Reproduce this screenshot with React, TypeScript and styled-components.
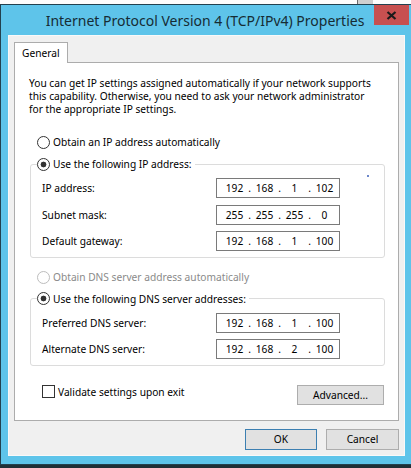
import React from 'react'
import styled, { createGlobalStyle } from 'styled-components'

const FONT = '"Noto Sans", "Open Sans", sans-serif'

const GlobalStyle = createGlobalStyle`
  html, body {
    margin: 0;
    padding: 0;
    background: #1f2f36;
  }
  body {
    font-family: ${FONT};
    -webkit-font-smoothing: antialiased;
  }
  * {
    box-sizing: border-box;
  }
`

const Screen = styled.div`
  width: 411px;
  height: 468px;
  overflow: hidden;
  display: flex;
  flex-direction: column;
  background: #1f2f36;
`
const Backdrop = styled.div`
  height: 4px;
  flex: none;
  display: flex;
  background: #fdfdfd;
`
const BackdropScroll = styled.div`
  margin-left: 357px;
  width: 16px;
  background: #cfcfcf;
  border-left: 1px solid #6a6a6a;
`
const Window = styled.div`
  flex: none;
  width: 411px;
  display: flex;
  flex-direction: column;
  background: #5ec4ea;
  border: 1px solid #22414f;
  border-right: none;
`
const TitleBar = styled.div`
  height: 30px;
  display: grid;
  grid-template-columns: 1fr auto 1fr;
  padding-right: 2px;
`
const Title = styled.div`
  grid-column: 2;
  align-self: center;
  font-size: 14px;
  line-height: 18px;
  color: #162c34;
  white-space: nowrap;
  padding-top: 1px;
`
const CloseButton = styled.div`
  grid-column: 3;
  justify-self: end;
  align-self: start;
  width: 35px;
  height: 20px;
  background: #c75050;
  display: flex;
  align-items: center;
  justify-content: center;
`
const Frame = styled.div`
  padding: 0 6px 8px 7px;
`
const Client = styled.div`
  background: #f0f0f0;
  padding: 7px 6px 6px 6px;
  box-shadow: inset 0 0 0 1px #f9f9f9;
  font-size: 10.2px;
  color: #000;
`
const TabStrip = styled.div`
  display: flex;
`
const Tab = styled.div`
  position: relative;
  z-index: 1;
  height: 21px;
  margin-bottom: -1px;
  padding: 0 7px 0 7px;
  display: flex;
  align-items: center;
  background: #fff;
  border: 1px solid #acacac;
  border-bottom: none;
  line-height: 13px;
`
const TabPage = styled.div`
  background: #fff;
  border: 1px solid #acacac;
  padding: 13.5px 13px 14.5px 14px;
`
const Description = styled.p`
  margin: 0;
  line-height: 13px;
  white-space: nowrap;
`
const OptionRow = styled.label<{ $top: number; $disabled?: boolean }>`
  display: flex;
  align-items: center;
  gap: 3px;
  height: 16px;
  margin: ${({ $top }) => $top}px 0 0 8px;
  color: ${({ $disabled }) => ($disabled ? '#8a8a8a' : '#000')};
  white-space: nowrap;
`
const Radio = styled.span<{ $checked?: boolean; $disabled?: boolean }>`
  flex: none;
  width: 13px;
  height: 13px;
  border-radius: 50%;
  border: 1px solid ${({ $disabled }) => ($disabled ? '#bdbdbd' : '#333')};
  background: ${({ $checked }) =>
    $checked ? 'radial-gradient(circle, #333 0 2.6px, #fff 3.2px)' : '#fff'};
`
const GroupBox = styled.fieldset<{ $top: number }>`
  position: relative;
  margin: ${({ $top }) => $top}px 0 0 1px;
  padding: 6px 0 6px 0;
  min-width: 0;
  border: 1px solid #dcdcdc;
  border-radius: 3px;
`
const GroupLegend = styled.legend`
  margin-left: 6px;
  padding: 0 3px 0 0;
  height: 16px;
  display: flex;
  align-items: center;
  gap: 3px;
  white-space: nowrap;
`
const StrayDot = styled.span`
  position: absolute;
  top: 3px;
  right: 15px;
  width: 2px;
  height: 2px;
  border-radius: 1px;
  background: #3b5fb8;
`
const FieldRow = styled.div`
  display: flex;
  align-items: center;
  justify-content: space-between;
  height: 20px;
  padding: 0 44px 0 11px;
  & + & {
    margin-top: 6.5px;
  }
`
const IpBox = styled.div`
  width: 124px;
  height: 20px;
  display: flex;
  align-items: center;
  padding-left: 6px;
  background: #fff;
  border: 1px solid #7a7a7a;
`
const Octet = styled.span`
  width: 23px;
  text-align: center;
`
const Dot = styled.span`
  width: 7px;
  text-align: center;
`
const FooterRow = styled.div`
  display: flex;
  align-items: flex-start;
  justify-content: space-between;
  margin: 19px 1px 0 13px;
`
const CheckRow = styled.label`
  display: flex;
  align-items: center;
  gap: 3px;
  height: 13px;
  white-space: nowrap;
`
const CheckBox = styled.span`
  flex: none;
  width: 13px;
  height: 13px;
  border: 1px solid #333;
  background: #fff;
`
const Button = styled.div<{ $width: number; $height: number; $default?: boolean }>`
  width: ${({ $width }) => $width}px;
  height: ${({ $height }) => $height}px;
  display: flex;
  align-items: center;
  justify-content: center;
  background: #e1e1e1;
  border: 1px solid ${({ $default }) => ($default ? '#3c7fb1' : '#adadad')};
  padding-bottom: 1px;
`
const ButtonBar = styled.div`
  display: flex;
  justify-content: flex-end;
  gap: 9px;
  margin-top: 8px;
`

const IpAddress = ({ parts }: { parts: string[] }) => (
  <IpBox>
    {parts.map((p, i) => (
      <React.Fragment key={i}>
        {i > 0 && <Dot>.</Dot>}
        <Octet>{p}</Octet>
      </React.Fragment>
    ))}
  </IpBox>
)

export default function App() {
  return (
    <>
      <GlobalStyle />
      <Screen>
        <Backdrop>
          <BackdropScroll />
        </Backdrop>
        <Window>
          <TitleBar>
            <Title>Internet Protocol Version 4 (TCP/IPv4) Properties</Title>
            <CloseButton>
              <svg width="11" height="9" viewBox="0 0 11 9">
                <path d="M1.5 1 L9.5 8 M9.5 1 L1.5 8" stroke="#1a1a1a" strokeWidth="2.2" />
              </svg>
            </CloseButton>
          </TitleBar>
          <Frame>
            <Client>
              <TabStrip>
                <Tab>General</Tab>
              </TabStrip>
              <TabPage>
                <Description>
                  You can get IP settings assigned automatically if your network supports
                  <br />
                  this capability. Otherwise, you need to ask your network administrator
                  <br />
                  for the appropriate IP settings.
                </Description>

                <OptionRow $top={18.5}>
                  <Radio />
                  Obtain an IP address automatically
                </OptionRow>

                <GroupBox $top={6}>
                  <GroupLegend>
                    <Radio $checked />
                    Use the following IP address:
                  </GroupLegend>
                  <StrayDot />
                  <FieldRow>
                    IP address:
                    <IpAddress parts={['192', '168', '1', '102']} />
                  </FieldRow>
                  <FieldRow>
                    Subnet mask:
                    <IpAddress parts={['255', '255', '255', '0']} />
                  </FieldRow>
                  <FieldRow>
                    Default gateway:
                    <IpAddress parts={['192', '168', '1', '100']} />
                  </FieldRow>
                </GroupBox>

                <OptionRow $top={11} $disabled>
                  <Radio $disabled />
                  Obtain DNS server address automatically
                </OptionRow>

                <GroupBox $top={5.5}>
                  <GroupLegend>
                    <Radio $checked />
                    Use the following DNS server addresses:
                  </GroupLegend>
                  <FieldRow>
                    Preferred DNS server:
                    <IpAddress parts={['192', '168', '1', '100']} />
                  </FieldRow>
                  <FieldRow>
                    Alternate DNS server:
                    <IpAddress parts={['192', '168', '2', '100']} />
                  </FieldRow>
                </GroupBox>

                <FooterRow>
                  <CheckRow>
                    <CheckBox />
                    Validate settings upon exit
                  </CheckRow>
                  <Button $width={87} $height={20}>Advanced...</Button>
                </FooterRow>
              </TabPage>
              <ButtonBar>
                <Button $width={72} $height={21} $default>OK</Button>
                <Button $width={73} $height={21}>Cancel</Button>
              </ButtonBar>
            </Client>
          </Frame>
        </Window>
      </Screen>
    </>
  )
}
